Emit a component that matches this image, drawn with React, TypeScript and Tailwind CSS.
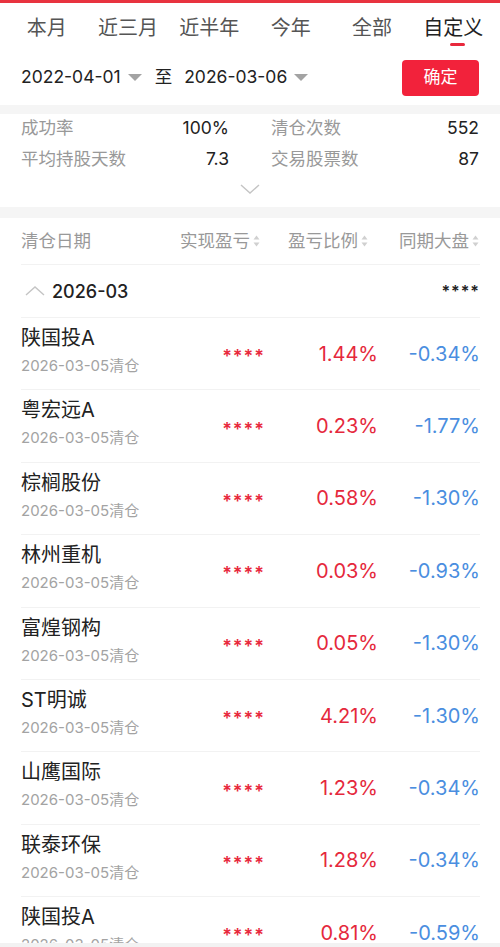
import React from 'react'

const tabs = ['本月', '近三月', '近半年', '今年', '全部', '自定义']

const rows = [
  { name: '陕国投A', date: '2026-03-05清仓', ratio: '1.44%', market: '-0.34%' },
  { name: '粤宏远A', date: '2026-03-05清仓', ratio: '0.23%', market: '-1.77%' },
  { name: '棕榈股份', date: '2026-03-05清仓', ratio: '0.58%', market: '-1.30%' },
  { name: '林州重机', date: '2026-03-05清仓', ratio: '0.03%', market: '-0.93%' },
  { name: '富煌钢构', date: '2026-03-05清仓', ratio: '0.05%', market: '-1.30%' },
  { name: 'ST明诚', date: '2026-03-05清仓', ratio: '4.21%', market: '-1.30%' },
  { name: '山鹰国际', date: '2026-03-05清仓', ratio: '1.23%', market: '-0.34%' },
  { name: '联泰环保', date: '2026-03-05清仓', ratio: '1.28%', market: '-0.34%' },
  { name: '陕国投A', date: '2026-03-05清仓', ratio: '0.81%', market: '-0.59%' },
]

const Caret = () => (
  <svg width="14" height="8" viewBox="0 0 14 8" className="ml-[7px]">
    <path d="M0 0 L14 0 L7 7 Z" fill="#a3a3a3" />
  </svg>
)

const SortIcon = () => (
  <svg width="7" height="14" viewBox="0 0 7 14" className="ml-[3px]">
    <path d="M3.5 1.5 L6.5 5.5 L0.5 5.5 Z" fill="#d0d0d0" />
    <path d="M3.5 12.5 L6.5 8.5 L0.5 8.5 Z" fill="#d0d0d0" />
  </svg>
)

const App = () => {
  return (
    <div
      className="w-[500px] h-[947px] overflow-hidden bg-white relative"
      style={{ fontFamily: 'Inter, "Noto Sans CJK SC", sans-serif' }}
    >
      <div className="h-[3px] bg-[#e8333f]" />

      {/* tabs */}
      <div className="grid grid-cols-6 px-[6px] h-[47px]">
        {tabs.map((t, i) => (
          <div key={t} className="flex flex-col items-center pt-[13px]">
            <span
              className={`text-[20px] leading-[24px] ${
                i === 5 ? 'text-[#222]' : 'text-[#555]'
              }`}
            >
              {t}
            </span>
            {i === 5 && <div className="mt-[3px] ml-[8px] w-[15px] h-[3px] rounded-full bg-[#e8283c]" />}
          </div>
        ))}
      </div>

      {/* date range */}
      <div className="h-[55px] flex items-center pl-[21px] pr-[21px]">
        <span className="text-[17.5px] text-[#222]">2022-04-01</span>
        <Caret />
        <span className="text-[17.5px] text-[#222] ml-[13px]">至</span>
        <span className="text-[17.5px] text-[#222] ml-[12px]">2026-03-06</span>
        <Caret />
        <button className="ml-auto w-[77px] h-[36px] rounded-[4px] bg-[#f2223b] text-white text-[17px] mt-[1px]">
          确定
        </button>
      </div>

      <div className="h-[9px] bg-[#f5f5f5]" />

      {/* stats */}
      <div className="h-[93px] px-[21px] pr-[21px] pt-[1px]">
        <div className="grid grid-cols-2 gap-x-[42px] gap-y-[5px]">
          <div className="flex justify-between h-[26px] items-center text-[17.5px]">
            <span className="text-[#999]">成功率</span>
            <span className="text-[#222]">100%</span>
          </div>
          <div className="flex justify-between h-[26px] items-center text-[17.5px]">
            <span className="text-[#999]">清仓次数</span>
            <span className="text-[#222]">552</span>
          </div>
          <div className="flex justify-between h-[26px] items-center text-[17.5px]">
            <span className="text-[#999]">平均持股天数</span>
            <span className="text-[#222]">7.3</span>
          </div>
          <div className="flex justify-between h-[26px] items-center text-[17.5px]">
            <span className="text-[#999]">交易股票数</span>
            <span className="text-[#222]">87</span>
          </div>
        </div>
        <div className="flex justify-center mt-[12px]">
          <svg width="20" height="10" viewBox="0 0 20 10">
            <path d="M1 1 L10 9 L19 1" fill="none" stroke="#c4c4c4" strokeWidth="1.4" />
          </svg>
        </div>
      </div>

      <div className="h-[11px] bg-[#f5f5f5]" />

      {/* table */}
      <div className="pl-[21px] pr-[20px]">
        <div className="grid grid-cols-[149px_90px_108px_111px] h-[47px] items-center border-b border-[#f2f2f2] text-[17.5px] text-[#999]">
          <span>清仓日期</span>
          <span className="flex items-center justify-end">实现盈亏<SortIcon /></span>
          <span className="flex items-center justify-end">盈亏比例<SortIcon /></span>
          <span className="flex items-center justify-end">同期大盘<SortIcon /></span>
        </div>

        <div className="h-[53px] flex items-center border-b border-[#f2f2f2]">
          <svg width="20" height="10" viewBox="0 0 20 10" className="ml-[4px]">
            <path d="M1 9 L10 1 L19 9" fill="none" stroke="#c4c4c4" strokeWidth="1.4" />
          </svg>
          <span className="ml-[7px] text-[18px] font-medium text-[#222]">2026-03</span>
          <span className="ml-auto text-[16px] font-semibold text-[#222] tracking-[1px]">****</span>
        </div>

        {rows.map((r, i) => (
          <div
            key={i}
            className="grid grid-cols-[149px_95px_113px_102px] h-[72.4px] border-b border-[#f2f2f2]"
          >
            <div className="pt-[8px]">
              <div className="text-[20px] leading-[24px] text-[#222] whitespace-nowrap">{r.name}</div>
              <div className="mt-[6px] text-[15px] leading-[20px] text-[#a3a3a3] whitespace-nowrap">{r.date}</div>
            </div>
            <div className="flex items-center justify-end pt-[6px] text-[18px] font-semibold text-[#e8283c] tracking-[1px]">
              ****
            </div>
            <div className="flex items-center justify-end text-[20px] text-[#e5283c]">
              {r.ratio}
            </div>
            <div className="flex items-center justify-end text-[20px] text-[#4a8ee0]">
              {r.market}
            </div>
          </div>
        ))}
      </div>

      <div className="absolute left-0 right-0 bottom-0 h-[4px] bg-[#f2f2f2]" />
    </div>
  )
}

export default App
